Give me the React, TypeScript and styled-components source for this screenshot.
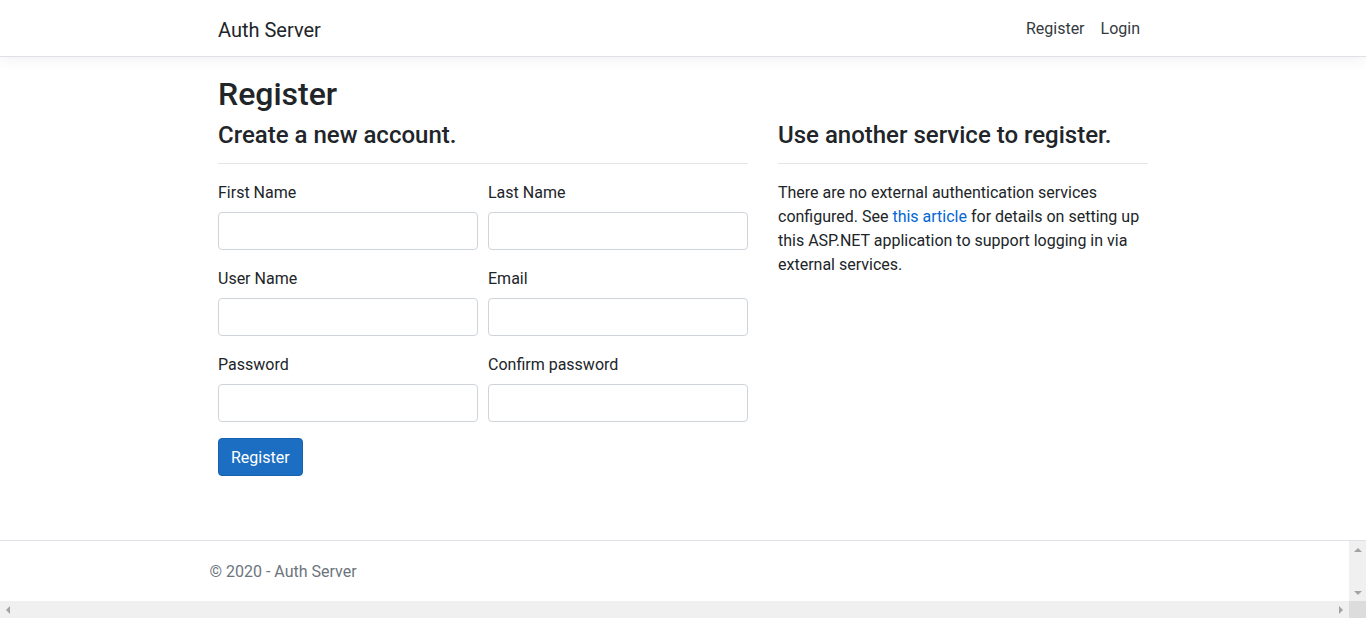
import styled, { createGlobalStyle } from "styled-components";

const GlobalStyle = createGlobalStyle`
  *, *::before, *::after { box-sizing: border-box; }
  html, body { margin: 0; padding: 0; }
  body {
    font-family: Roboto, "Noto Sans", "Liberation Sans", sans-serif;
    font-size: 16px;
    line-height: 1.5;
    color: #212529;
    background: #fff;
  }
`;

const Page = styled.div`
  min-height: 100vh;
  display: flex;
  flex-direction: column;
`;

const Container = styled.div`
  width: 100%;
  max-width: 960px;
  margin: 0 auto;
  padding: 0 15px;
`;

const NavBar = styled.header`
  background: #fff;
  border-bottom: 1px solid #dee2e6;
  box-shadow: 0 0.25rem 0.75rem rgba(0, 0, 0, 0.05);
  padding: 8px 0 7px;
  margin-bottom: 17px;
`;

const NavInner = styled(Container)`
  display: flex;
  align-items: center;
  justify-content: space-between;
`;

const Brand = styled.a`
  font-size: 20px;
  line-height: 30px;
  padding: 6px 0 4px;
  color: #212529;
  text-decoration: none;
`;

const NavLinks = styled.nav`
  display: flex;
  padding-top: 1px;
`;

const NavLink = styled.a`
  padding: 8px;
  color: #343a40;
  text-decoration: none;
`;

const Main = styled(Container)`
  flex: 1;
`;

const Title = styled.h1`
  margin: 1px 0 6px;
  font-size: 32px;
  font-weight: 500;
  line-height: 1.2;
`;

const Row = styled.div`
  display: grid;
  grid-template-columns: 53fr 37fr;
  column-gap: 30px;
`;

const SubTitle = styled.h4`
  margin: 0 0 8px;
  padding-top: 2px;
  font-size: 24px;
  font-weight: 500;
  line-height: 1.2;
`;

const Rule = styled.hr`
  margin: 13px 0 16px;
  border: 0;
  border-top: 1px solid rgba(0, 0, 0, 0.1);
`;

const FormGrid = styled.div`
  display: grid;
  grid-template-columns: 1fr 1fr;
  column-gap: 10px;
`;

const Field = styled.div`
  margin-bottom: 16px;
`;

const Label = styled.label`
  display: block;
  padding-top: 1px;
  margin-bottom: 7px;
`;

const Input = styled.input`
  display: block;
  width: 100%;
  height: 38px;
  padding: 6px 12px;
  font: inherit;
  color: #495057;
  background: #fff;
  border: 1px solid #ced4da;
  border-radius: 4px;
`;

const Button = styled.button`
  font: inherit;
  color: #fff;
  background: #1b6ec2;
  border: 1px solid #1861ac;
  border-radius: 4px;
  padding: 7px 12px 5px;
  line-height: 24px;
`;

const Text = styled.p`
  margin: 0 0 16px;
  padding-top: 1px;
`;

const Link = styled.a`
  color: #0366d6;
  text-decoration: none;
`;

const Footer = styled.footer`
  border-top: 1px solid #dee2e6;
  display: grid;
  grid-template-columns: 1fr 17px;
  grid-template-rows: 60px 17px;
  margin-top: 64px;
`;

const FooterContent = styled(Container)`
  line-height: 59px;
  padding-top: 1px;
  color: #6c757d;
  white-space: nowrap;
`;

const ScrollTrack = styled.div<{ $vertical?: boolean }>`
  background: #f0f0f0;
  display: flex;
  flex-direction: ${({ $vertical }) => ($vertical ? "column" : "row")};
  justify-content: space-between;
  align-items: center;
  padding: ${({ $vertical }) => ($vertical ? "7px 0 6px" : "0 6px")};
`;

const ScrollCorner = styled.div`
  background: #dcdcdc;
`;

const Arrow = styled.span<{ $dir: "up" | "down" | "left" | "right" }>`
  width: 0;
  height: 0;
  border: 4px solid transparent;
  ${({ $dir }) =>
    $dir === "up"
      ? "border-bottom-color: #a3a3a3; border-top-width: 0;"
      : $dir === "down"
      ? "border-top-color: #a3a3a3; border-bottom-width: 0;"
      : $dir === "left"
      ? "border-right-color: #a3a3a3; border-left-width: 0;"
      : "border-left-color: #a3a3a3; border-right-width: 0;"}
`;

const fields = ["First Name", "Last Name", "User Name", "Email", "Password", "Confirm password"];

export default function App() {
  return (
    <>
      <GlobalStyle />
      <Page>
        <NavBar>
          <NavInner>
            <Brand href="#">Auth Server</Brand>
            <NavLinks>
              <NavLink href="#">Register</NavLink>
              <NavLink href="#">Login</NavLink>
            </NavLinks>
          </NavInner>
        </NavBar>
        <Main>
          <Title>Register</Title>
          <Row>
            <section>
              <SubTitle>Create a new account.</SubTitle>
              <Rule />
              <FormGrid>
                {fields.map((name) => (
                  <Field key={name}>
                    <Label>{name}</Label>
                    <Input
                      type={name.toLowerCase().includes("password") ? "password" : "text"}
                    />
                  </Field>
                ))}
              </FormGrid>
              <Button type="button">Register</Button>
            </section>
            <section>
              <SubTitle>Use another service to register.</SubTitle>
              <Rule />
              <Text>
                There are no external authentication services configured. See{" "}
                <Link href="#">this article</Link> for details on setting up
                this ASP.NET application to support logging in via external
                services.
              </Text>
            </section>
          </Row>
        </Main>
        <Footer>
          <FooterContent>© 2020 - Auth Server</FooterContent>
          <ScrollTrack $vertical>
            <Arrow $dir="up" />
            <Arrow $dir="down" />
          </ScrollTrack>
          <ScrollTrack>
            <Arrow $dir="left" />
            <Arrow $dir="right" />
          </ScrollTrack>
          <ScrollCorner />
        </Footer>
      </Page>
    </>
  );
}
